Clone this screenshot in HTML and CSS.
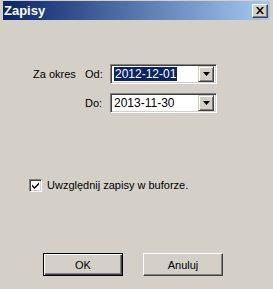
FILE: index.html
```html
<!DOCTYPE html>
<html>
<head>
<meta charset="utf-8">
<link rel="stylesheet" href="styles.css">
</head>
<body>
<div class="window">
  <div class="titlebar">
    <span class="title">Zapisy</span>
    <span class="close"><svg width="8" height="7" viewBox="0 0 8 7"><path d="M0 0h2l2 2.5L6 0h2L5 3.5 8 7H6L4 4.5 2 7H0l3-3.5z" fill="#000"/></svg></span>
  </div>
  <div class="content">
    <div class="form">
      <span class="lbl">Za okres</span>
      <span class="lbl">Od:</span>
      <div class="combo"><span class="val"><span class="sel">2012-12-01</span></span><span class="btn"><svg width="7" height="4" viewBox="0 0 7 4"><path d="M0 0h7L3.5 4z" fill="#000"/></svg></span></div>
      <span></span>
      <span class="lbl">Do:</span>
      <div class="combo"><span class="val">2013-11-30</span><span class="btn"><svg width="7" height="4" viewBox="0 0 7 4"><path d="M0 0h7L3.5 4z" fill="#000"/></svg></span></div>
    </div>
    <div class="check">
      <span class="box"><svg width="9" height="9" viewBox="0 0 9 9"><path d="M1 3.5l2.5 2.5L8 1.5v2L3.5 8 1 5.5z" fill="#000"/></svg></span>
      <span class="lbl">Uwzględnij zapisy w buforze.</span>
    </div>
    <div class="buttons">
      <div class="button default"><span>OK</span></div>
      <div class="button"><span>Anuluj</span></div>
    </div>
  </div>
</div>
</body>
</html>
```
FILE: styles.css
```css
html, body { margin: 0; padding: 0; }
body {
  width: 273px; height: 289px; overflow: hidden;
  background: #d4d0c8;
  font-family: "Liberation Sans", Arial, sans-serif;
  font-size: 11px; color: #000;
}
.window {
  width: 273px; height: 289px; box-sizing: border-box;
  padding: 1px 3px 3px 3px;
  display: flex; flex-direction: column;
}
.titlebar {
  height: 19px;
  background: linear-gradient(to right, #0a246a, #a6caf0);
  display: flex; align-items: center; justify-content: space-between;
  padding: 0 2px 0 1px;
}
.title { color: #fff; font-weight: bold; font-size: 13px; letter-spacing: 0; }
.close {
  width: 16px; height: 14px; box-sizing: border-box;
  background: #d4d0c8;
  border: 1px solid; border-color: #fff #404040 #404040 #fff;
  box-shadow: inset -1px -1px 0 #808080;
  display: flex; align-items: center; justify-content: center;
}
.content { flex: 1; display: flex; flex-direction: column; }
.form {
  margin: 44px 0 0 30px;
  display: grid;
  grid-template-columns: 52px 25px 107px;
  grid-auto-rows: 20px;
  row-gap: 9px;
  align-items: center;
}
.lbl { line-height: 13px; }
.combo {
  height: 20px; box-sizing: border-box;
  background: #fff;
  border: 1px solid; border-color: #808080 #fff #fff #808080;
  box-shadow: inset 1px 1px 0 #404040, inset -1px -1px 0 #d4d0c8;
  display: flex; align-items: center;
  padding: 2px;
}
.val { flex: 1; padding-left: 1px; font-size: 12px; line-height: 14px; }
.sel { background: #0a246a; color: #fff; padding: 0 1px; }
.btn {
  width: 16px; height: 16px; box-sizing: border-box;
  background: #d4d0c8;
  border: 1px solid; border-color: #d4d0c8 #404040 #404040 #d4d0c8;
  box-shadow: inset 1px 1px 0 #fff, inset -1px -1px 0 #808080;
  display: flex; align-items: center; justify-content: center;
}
.check {
  margin: 66px 0 0 26px;
  display: flex; align-items: center; gap: 5px;
}
.box {
  width: 13px; height: 13px; box-sizing: border-box;
  background: #fff;
  border: 1px solid; border-color: #808080 #fff #fff #808080;
  box-shadow: inset 1px 1px 0 #404040, inset -1px -1px 0 #d4d0c8;
  display: flex; align-items: center; justify-content: center;
}
.check .lbl { font-size: 11px; }
.buttons {
  margin: 61px 0 0 40px;
  display: flex; gap: 20px;
}
.button {
  width: 80px; height: 23px; box-sizing: border-box;
  background: #d4d0c8;
  border: 1px solid; border-color: #fff #404040 #404040 #fff;
  box-shadow: inset -1px -1px 0 #808080;
  display: flex; align-items: center; justify-content: center;
}
.button.default {
  border: 1px solid #000;
  box-shadow: inset 1px 1px 0 #fff, inset -1px -1px 0 #404040, inset -2px -2px 0 #808080;
}
```
